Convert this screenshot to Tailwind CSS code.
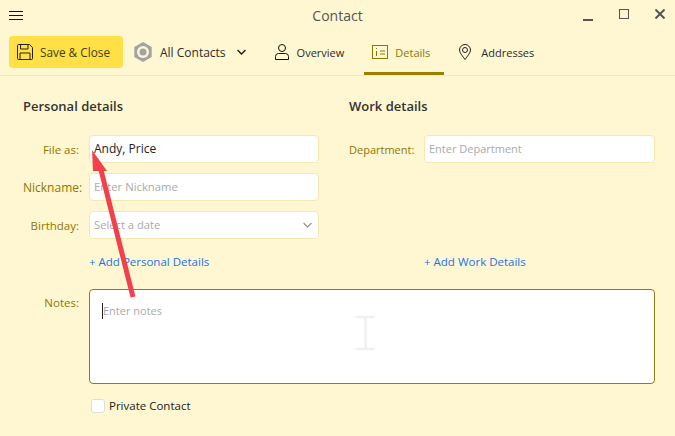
<!DOCTYPE html>
<html lang="en">
<head>
    <meta charset="UTF-8">
    <title>Contact</title>
    <script src="https://cdn.jsdelivr.net/npm/@tailwindcss/browser@4"></script>
</head>
<body class="relative w-[675px] h-[436px] overflow-hidden bg-[#fff7d1] font-['Open_Sans',sans-serif] text-[11.500px] text-[#2b2b2b]">
    <!-- Title bar -->
    <div class="grid grid-cols-[1fr_auto_1fr] items-center h-[32px] pb-[1px]">
        <svg class="ml-[9px] w-[14px] h-[9px]" viewBox="0 0 14 9" fill="none" stroke="#111" stroke-width="1"><path d="M0 .5h14M0 4.500h14M0 8.500h14"/></svg>
        <div class="text-[14px] text-[#555]">Contact</div>
        <div class="flex items-center justify-end gap-[26px] pr-[10px]">
            <svg class="w-[10px] h-[12px] mt-[1px]" viewBox="0 0 10 12" fill="none" stroke="#555" stroke-width="2"><path d="M0 10h10"/></svg>
            <svg class="w-[10px] h-[10px] mb-[3px]" viewBox="0 0 10 10" fill="none" stroke="#555" stroke-width="1"><rect x=".5" y=".5" width="9" height="9"/></svg>
            <svg class="w-[10px] h-[10px] mb-[3px]" viewBox="0 0 10 10" fill="none" stroke="#555" stroke-width="2"><path d="M.5 .5l9 9M9.500 .5l-9 9"/></svg>
        </div>
    </div>

    <!-- Toolbar -->
    <div class="flex items-stretch h-[44px] border-b border-[#f3e7b3] pl-[9px]">
        <div class="flex items-center gap-[7px] h-[32px] mt-[4px] w-[114px] pl-[8px] rounded-[4px] bg-[#ffe046] text-[#3f3f14]">
            <svg class="w-[16px] h-[16px] shrink-0" viewBox="0 0 16 16" fill="none" stroke="#222" stroke-width="1"><path d="M.5 1.500a1 1 0 0 1 1-1h11l3 3v11a1 1 0 0 1-1 1h-13a1 1 0 0 1-1-1z"/><path d="M3.500 .5v4.500h7.500v-4.500M3 15.500v-6.500h10v6.500"/></svg>
            <span class="pt-[2px] text-[11.800px]">Save &amp; Close</span>
        </div>
        <div class="flex items-center h-[32px] mt-[4px] ml-[10px]">
            <svg class="w-[20px] h-[20px]" viewBox="0 0 20 20"><polygon points="10,0 18.700,5 18.700,15 10,20 1.300,15 1.300,5" fill="#a3a3a3"/><circle cx="10" cy="10" r="6" fill="#fff7d1"/><circle cx="10" cy="10" r="3.500" fill="#a3a3a3"/></svg>
            <span class="ml-[7px] pt-[2px] text-[12px]">All Contacts</span>
            <svg class="w-[9px] h-[6px] ml-[11px]" viewBox="0 0 9 6" fill="none" stroke="#222" stroke-width="1.500"><path d="M.5 1l4 4 4-4"/></svg>
        </div>
        <div class="flex items-center h-[32px] mt-[4px] ml-[29px] text-[11px]">
            <svg class="w-[14px] h-[16px]" viewBox="0 0 14 16" fill="none" stroke="#111" stroke-width="1"><circle cx="7" cy="4" r="3.500"/><path d="M.5 15.500v-3a3 3 0 0 1 3-3h7a3 3 0 0 1 3 3v3z"/></svg>
            <span class="ml-[8px] pt-[2px]">Overview</span>
        </div>
        <div class="relative flex items-center h-[32px] mt-[4px] ml-[28px] text-[11px] text-[#8f7600]">
            <svg class="w-[16px] h-[14px]" viewBox="0 0 16 14" fill="none" stroke="#8f7800" stroke-width="1"><rect x=".5" y=".5" width="15" height="13"/><path d="M4.500 3v1M4.500 6v5M8 6h5M8 9h5"/></svg>
            <span class="ml-[7px] pt-[2px]">Details</span>
            <div class="absolute left-[-8px] top-[36px] w-[80px] h-[3px] bg-[#9a7f00]"></div>
        </div>
        <div class="flex items-center h-[32px] mt-[4px] ml-[29px] text-[11px]">
            <svg class="w-[12px] h-[16px]" viewBox="0 0 12 16" fill="none" stroke="#222" stroke-width="1"><path d="M6 15.500c-2-3-5.500-6.500-5.500-9.500a5.500 5.500 0 0 1 11 0c0 3-3.500 6.500-5.500 9.500z"/><circle cx="6" cy="6" r="2.500"/></svg>
            <span class="ml-[10px] pt-[2px]">Addresses</span>
        </div>
    </div>

    <!-- Form -->
    <div class="grid grid-cols-[326px_1fr] pl-[23px] pt-[21px]">
        <div>
            <h2 class="text-[13px] font-semibold h-[19px] leading-[19px] text-[#333]">Personal details</h2>
            <div class="grid grid-cols-[56px_230px] gap-x-[10px] gap-y-[10px] mt-[19px] items-center">
                <label class="text-right text-[#8f7600] pt-[2px]">File as:</label>
                <div class="flex items-center h-[28px] pl-[4px] bg-white border border-[#f3e7b3] rounded-[4px] text-[12px] text-[#222]">Andy, Price</div>
                <label class="text-right text-[12px] text-[#8f7600] pt-[2px] whitespace-nowrap">Nickname:</label>
                <div class="flex items-center h-[28px] pl-[4px] bg-white border border-[#f3e7b3] rounded-[4px] text-[11.300px] text-[#aaa]">Enter Nickname</div>
                <label class="text-right text-[#8f7600] pt-[2px]">Birthday:</label>
                <div class="flex items-center justify-between h-[28px] pl-[4px] pr-[5px] bg-white border border-[#f3e7b3] rounded-[4px] text-[11.200px] text-[#aaa]">
                    <span>Select a date</span>
                    <svg class="w-[9px] h-[6px] mr-[1px]" viewBox="0 0 9 6" fill="none" stroke="#999" stroke-width="1.300"><path d="M.5 1l4 4 4-4"/></svg>
                </div>
                <div></div>
                <div class="mt-[3px] h-[20px] leading-[20px] text-[#1a73f0]">+ Add Personal Details</div>
            </div>
        </div>
        <div>
            <h2 class="text-[13px] font-semibold h-[19px] leading-[19px] text-[#333]">Work details</h2>
            <div class="grid grid-cols-[65px_231px] gap-x-[10px] gap-y-[10px] mt-[19px] items-center">
                <label class="text-right text-[11px] text-[#8f7600] pt-[2px] whitespace-nowrap">Department:</label>
                <div class="flex items-center h-[28px] pl-[4px] bg-white border border-[#f3e7b3] rounded-[4px] text-[11px] text-[#aaa]">Enter Department</div>
                <div class="col-start-2 mt-[79px] h-[20px] leading-[20px] text-[#1a73f0]">+ Add Work Details</div>
            </div>
        </div>
    </div>

    <div class="grid grid-cols-[56px_566px] gap-x-[10px] pl-[23px] mt-[17px]">
        <label class="text-right text-[#8f7600] pt-[5px]">Notes:</label>
        <div class="flex items-start h-[95px] pl-[12px] pt-[13px] bg-white border border-[#8f7d12] rounded-[4px] text-[11px] text-[#aaa]">
            <span class="border-l border-[#222] leading-[16px]">Enter notes</span>
        </div>
        <div class="col-start-2 flex items-center gap-[4px] mt-[13px] pl-[2px] text-[#222]">
            <span class="w-[14px] h-[14px] bg-white border border-[#dedede] rounded-[3px]"></span>
            <span>Private Contact</span>
        </div>
    </div>

    <!-- Annotation arrow and mouse cursor lying over the form -->
    <svg class="absolute left-0 top-0 pointer-events-none" width="675" height="436" viewBox="0 0 675 436">
        <path d="M133 297L101 170" stroke="#f2414a" stroke-width="5" fill="none"/>
        <polygon points="92,150 107,171 93,171" fill="#f2414a"/>
        <path d="M356 317h19M356 349h19M365.500 317v32" stroke="#eff1f0" stroke-width="2.500" fill="none"/>
    </svg>
</body>
</html>
